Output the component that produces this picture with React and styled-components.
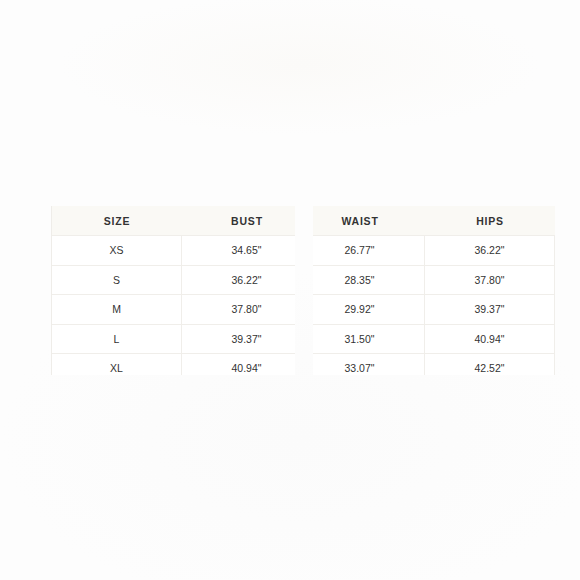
import React from 'react';
import styled, { createGlobalStyle } from 'styled-components';

const GlobalStyle = createGlobalStyle`
    html, body {
        margin: 0;
        padding: 0;
    }
    body {
        width: 580px;
        height: 580px;
        overflow: hidden;
        font-family: "Liberation Sans", Arial, sans-serif;
        background:
            radial-gradient(ellipse 240px 70px at 300px 65px, #fbfaf8 0%, rgba(251, 250, 248, 0) 100%),
            radial-gradient(ellipse 300px 170px at 300px 440px, #fbfbfb 0%, rgba(251, 251, 251, 0) 100%),
            #fdfdfd;
    }
`;

const headers = ['SIZE', 'BUST', 'WAIST', 'HIPS'];

const rows = [
    ['XS', '34.65"', '26.77"', '36.22"'],
    ['S', '36.22"', '28.35"', '37.80"'],
    ['M', '37.80"', '29.92"', '39.37"'],
    ['L', '39.37"', '31.50"', '40.94"'],
    ['XL', '40.94"', '33.07"', '42.52"'],
];

const Page = styled.div`
    display: flex;
    gap: 18px;
    padding: 206px 0 0 51px;
`;

const Panel = styled.div`
    width: ${p => p.$width}px;
    height: 169px;
    overflow: hidden;
    background: #ffffff;
    border-left: ${p => (p.$edge ? '1px solid #efede9' : 'none')};
`;

const Table = styled.div`
    width: 260px;
    margin-left: ${p => p.$shift || 0}px;
    display: grid;
    grid-template-columns: 130px 130px;
`;

const HeaderCell = styled.div`
    height: 29px;
    display: flex;
    align-items: center;
    justify-content: center;
    background: #faf9f5;
    font-size: 10.5px;
    font-weight: 700;
    letter-spacing: 0.8px;
    color: #333333;
`;

const Cell = styled.div`
    height: 29.5px;
    display: flex;
    align-items: center;
    justify-content: center;
    border-top: 1px solid #f0eeea;
    border-right: 1px solid #f0eeea;
    box-sizing: border-box;
    font-size: 10.5px;
    color: #333333;
`;

const SizeTable = ({ cols, width, shift, edge }) => (
    <Panel $width={width} $edge={edge}>
        <Table $shift={shift}>
            {cols.map(c => (
                <HeaderCell key={c}>{headers[c]}</HeaderCell>
            ))}
            {rows.map(row => (
                cols.map(c => (
                    <Cell key={`${row[0]}-${c}`}>{row[c]}</Cell>
                ))
            ))}
        </Table>
    </Panel>
);

const App = () => (
    <>
        <GlobalStyle />
        <Page>
            <SizeTable cols={[0, 1]} width={243} edge />
            <SizeTable cols={[2, 3]} width={242} shift={-18} />
        </Page>
    </>
);

export default App;
